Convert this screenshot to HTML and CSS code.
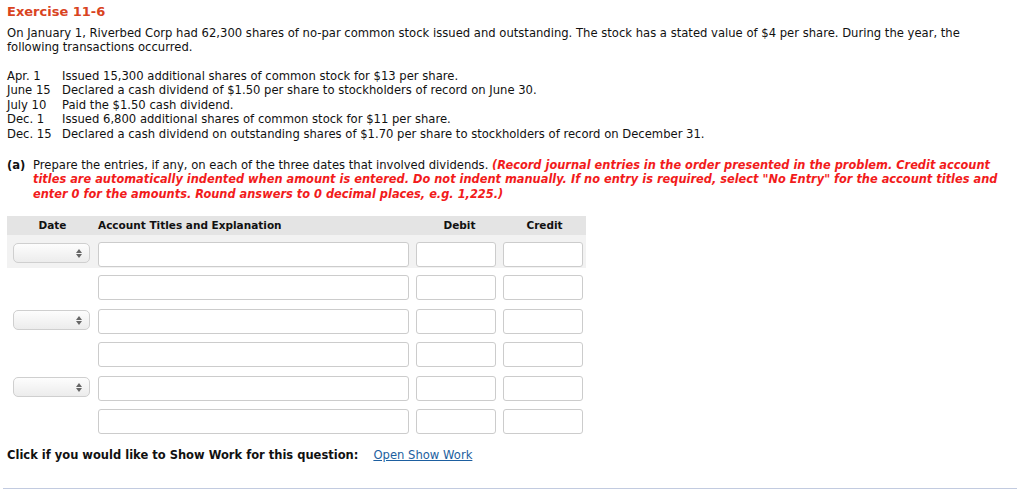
FILE: index.html
```html
<!DOCTYPE html>
<html>
<head>
<meta charset="utf-8">
<link rel="stylesheet" href="styles.css">
</head>
<body>
<div class="page">
  <h1 class="title">Exercise 11-6</h1>
  <p class="intro">On January 1, Riverbed Corp had 62,300 shares of no-par common stock issued and outstanding. The stock has a stated value of $4 per share. During the year, the following transactions occurred.</p>
  <div class="events">
    <span>Apr. 1</span><span>Issued 15,300 additional shares of common stock for $13 per share.</span>
    <span>June 15</span><span>Declared a cash dividend of $1.50 per share to stockholders of record on June 30.</span>
    <span>July 10</span><span>Paid the $1.50 cash dividend.</span>
    <span>Dec. 1</span><span>Issued 6,800 additional shares of common stock for $11 per share.</span>
    <span>Dec. 15</span><span>Declared a cash dividend on outstanding shares of $1.70 per share to stockholders of record on December 31.</span>
  </div>
  <div class="question">
    <b class="qlabel">(a)</b>
    <p class="qtext">Prepare the entries, if any, on each of the three dates that involved dividends. <em class="instr">(Record journal entries in the order presented in the problem. Credit account titles are automatically indented when amount is entered. Do not indent manually. If no entry is required, select "No Entry" for the account titles and enter 0 for the amounts. Round answers to 0 decimal places, e.g. 1,225.)</em></p>
  </div>
  <div class="journal">
    <div class="jhead">
      <span class="hdate">Date</span>
      <span class="hacct">Account Titles and Explanation</span>
      <span class="hnum">Debit</span>
      <span class="hnum">Credit</span>
    </div>
    <div class="jrow shaded">
      <div class="cdate"><div class="select"><span class="arrows"></span></div></div>
      <div class="field acct"></div><div class="field num"></div><div class="field num"></div>
    </div>
    <div class="jrow">
      <div class="cdate"></div>
      <div class="field acct"></div><div class="field num"></div><div class="field num"></div>
    </div>
    <div class="jrow">
      <div class="cdate"><div class="select"><span class="arrows"></span></div></div>
      <div class="field acct"></div><div class="field num"></div><div class="field num"></div>
    </div>
    <div class="jrow">
      <div class="cdate"></div>
      <div class="field acct"></div><div class="field num"></div><div class="field num"></div>
    </div>
    <div class="jrow">
      <div class="cdate"><div class="select"><span class="arrows"></span></div></div>
      <div class="field acct"></div><div class="field num"></div><div class="field num"></div>
    </div>
    <div class="jrow">
      <div class="cdate"></div>
      <div class="field acct"></div><div class="field num"></div><div class="field num"></div>
    </div>
  </div>
  <div class="showwork">
    <b>Click if you would like to Show Work for this question:</b>
    <a class="link" href="#">Open Show Work</a>
  </div>
</div>
<div class="footer-line"></div>
</body>
</html>
```
FILE: styles.css
```css
html, body {
  margin: 0;
  padding: 0;
  background: #ffffff;
}
body {
  font-family: "DejaVu Sans", Verdana, sans-serif;
  font-size: 11.6px;
  line-height: 14.5px;
  color: #111;
}
.page {
  padding: 5px 7px 0 7px;
}
.title {
  margin: 0;
  font-size: 13px;
  line-height: 14.5px;
  font-weight: bold;
  color: #d9441f;
}
.intro {
  margin: 6px 0 0 0;
  width: 990px;
}
.events {
  margin-top: 14px;
  display: grid;
  grid-template-columns: 55px auto;
}
.question {
  margin-top: 16.5px;
  display: flex;
}
.qlabel {
  width: 26px;
  flex: none;
}
.qtext {
  margin: 0;
  width: 975px;
}
.instr {
  font-weight: bold;
  font-style: italic;
  font-size: 11.4px;
  color: #f21b1b;
}
.journal {
  margin-top: 15px;
  width: 579px;
}
.jhead {
  display: grid;
  grid-template-columns: 91px 318px 87px 83px;
  height: 19px;
  align-items: center;
  background: #e4e4e4;
  font-weight: bold;
  font-size: 10.5px;
}
.hdate {
  text-align: center;
}
.hnum {
  text-align: center;
}
.jrow {
  display: grid;
  grid-template-columns: 91px 318px 87px 83px;
  height: 33.4px;
  padding-top: 7px;
  box-sizing: border-box;
}
.jrow.shaded {
  background: #f2f2f2;
}
.cdate {
  padding-left: 6px;
  padding-top: 1px;
}
.select {
  position: relative;
  width: 77px;
  height: 20px;
  box-sizing: border-box;
  border: 1px solid #cfcfcf;
  border-radius: 5px;
  background: linear-gradient(#fdfdfd, #ececec);
}
.arrows {
  position: absolute;
  right: 10px;
  top: 5px;
  width: 0;
  height: 0;
}
.arrows::before, .arrows::after {
  content: "";
  position: absolute;
  left: -3px;
  border-left: 3px solid transparent;
  border-right: 3px solid transparent;
}
.arrows::before {
  top: 0;
  border-bottom: 4px solid #666;
}
.arrows::after {
  top: 5px;
  border-top: 4px solid #666;
}
.field {
  height: 25px;
  box-sizing: border-box;
  border: 1px solid #cccccc;
  border-radius: 3px;
  background: #fff;
}
.field.acct {
  width: 311px;
}
.field.num {
  width: 80px;
}
.showwork {
  margin-top: 13px;
  display: flex;
  gap: 15px;
}
.showwork b {
  font-size: 11.5px;
}
.link {
  color: #1d5fa0;
  text-decoration: underline;
}
.footer-line {
  margin: 25px 7px 0 3px;
  height: 1px;
  background: #c2cbe0;
}
```
